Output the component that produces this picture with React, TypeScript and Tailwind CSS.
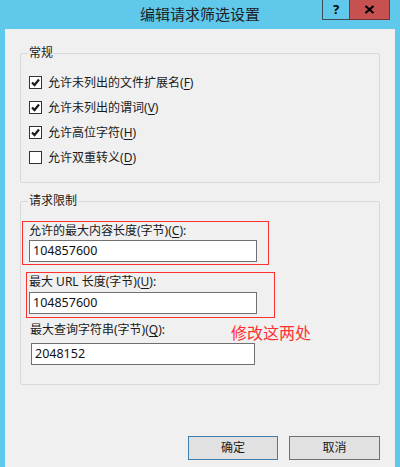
import React from 'react';

const font = { fontFamily: '"Noto Sans", "Noto Sans CJK SC", sans-serif' };

const Check: React.FC<{ checked: boolean; label: string; k: string }> = ({ checked, label, k }) => (
    <div className="h-[25px] flex items-center pl-[8px]">
        <div className="w-[13px] h-[13px] border border-[#333333] bg-white flex items-center justify-center">
            {checked && (
                <svg width="11" height="11" viewBox="0 0 11 11">
                    <path d="M2 5.5 L4.5 8 L9 2.5" fill="none" stroke="#1a1a1a" strokeWidth="2.2" />
                </svg>
            )}
        </div>
        <span className="ml-[6px] text-[12px] leading-[16px] text-[#1a1a1a]">
            {label}(<u className="underline-offset-2">{k}</u>)
        </span>
    </div>
);

const Field: React.FC<{ value: string; className?: string }> = ({ value, className = '' }) => (
    <div className={`h-[22px] border border-[#707070] bg-white flex items-center pl-[3px] text-[12.5px] text-[#111] ${className}`}>
        {value}
    </div>
);

export default function App() {
    return (
        <div className="w-[400px] h-[467px] bg-[#60c8ea] flex flex-col overflow-hidden" style={font}>
            {/* Title bar */}
            <div className="h-[29px] flex items-start relative">
                <div className="flex-1 text-center text-[15px] leading-[29px] text-[#1e1e1e]">编辑请求筛选设置</div>
                <div className="absolute right-[10px] top-0 flex">
                    <div className="w-[28px] h-[20px] border border-[#3d4d58] border-t-0 flex items-center justify-center text-[13px] font-bold text-black">?</div>
                    <div className="w-[40px] h-[20px] bg-[#c75050] border border-[#7a3030] border-t-0 border-l-0 flex items-center justify-center">
                        <svg width="11" height="9" viewBox="0 0 11 9">
                            <path d="M1.5 1 L9.5 8 M9.5 1 L1.5 8" stroke="#000" strokeWidth="2.2" />
                        </svg>
                    </div>
                </div>
            </div>

            {/* Body */}
            <div className="flex-1 mx-[5px] bg-[#f0f0f0] pt-[16px] px-[15px] flex flex-col">
                <fieldset className="border border-[#d9d9d9] rounded-[2px] pt-[9px] pb-[12px]">
                    <legend className="ml-[7px] px-[1px] text-[12px] leading-[16px] text-[#1a1a1a]">常规</legend>
                    <Check checked label="允许未列出的文件扩展名" k="F" />
                    <Check checked label="允许未列出的谓词" k="V" />
                    <Check checked label="允许高位字符" k="H" />
                    <Check checked={false} label="允许双重转义" k="D" />
                </fieldset>

                <fieldset className="mt-[10px] border border-[#d9d9d9] rounded-[2px] pb-[19px]">
                    <legend className="ml-[7px] px-[1px] text-[12px] leading-[16px] text-[#1a1a1a]">请求限制</legend>

                    <div className="mt-[12px] ml-[1px] w-[247px] h-[44px] border border-[#ff3030] pt-[1px] pl-[6px]">
                        <div className="text-[12px] leading-[16px] text-[#1a1a1a]">
                            允许的最大内容长度(字节)(<u className="underline-offset-2">C</u>):
                        </div>
                        <Field value="104857600" className="mt-[1px] w-[228px]" />
                    </div>

                    <div className="mt-[7px] ml-[5px] w-[249px] h-[46px] border border-[#ff3030] pt-[1px] pl-[2px]">
                        <div className="text-[12px] leading-[16px] text-[#1a1a1a]">
                            最大 URL 长度(字节)(<u className="underline-offset-2">U</u>):
                        </div>
                        <Field value="104857600" className="mt-[2px] w-[228px]" />
                    </div>

                    <div className="mt-[4px] flex items-end pl-[9px]">
                        <div className="w-[201px] text-[12px] leading-[16px] text-[#1a1a1a]">
                            最大查询字符串(字节)(<u className="underline-offset-2">Q</u>):
                        </div>
                        <div className="text-[16px] leading-[18px] text-[#ff3030] -mb-[4px]">修改这两处</div>
                    </div>
                    <Field value="2048152" className="mt-[5px] ml-[10px] w-[224px]" />
                </fieldset>

                <div className="mt-[51px] flex justify-end gap-[11px]">
                    <div className="w-[90px] h-[24px] bg-[#e1e1e1] border border-[#3c7fb1] flex items-center justify-center text-[12px] text-[#1a1a1a]">确定</div>
                    <div className="w-[91px] h-[24px] bg-[#e1e1e1] border border-[#707070] flex items-center justify-center text-[12px] text-[#1a1a1a]">取消</div>
                </div>
            </div>
        </div>
    );
}
